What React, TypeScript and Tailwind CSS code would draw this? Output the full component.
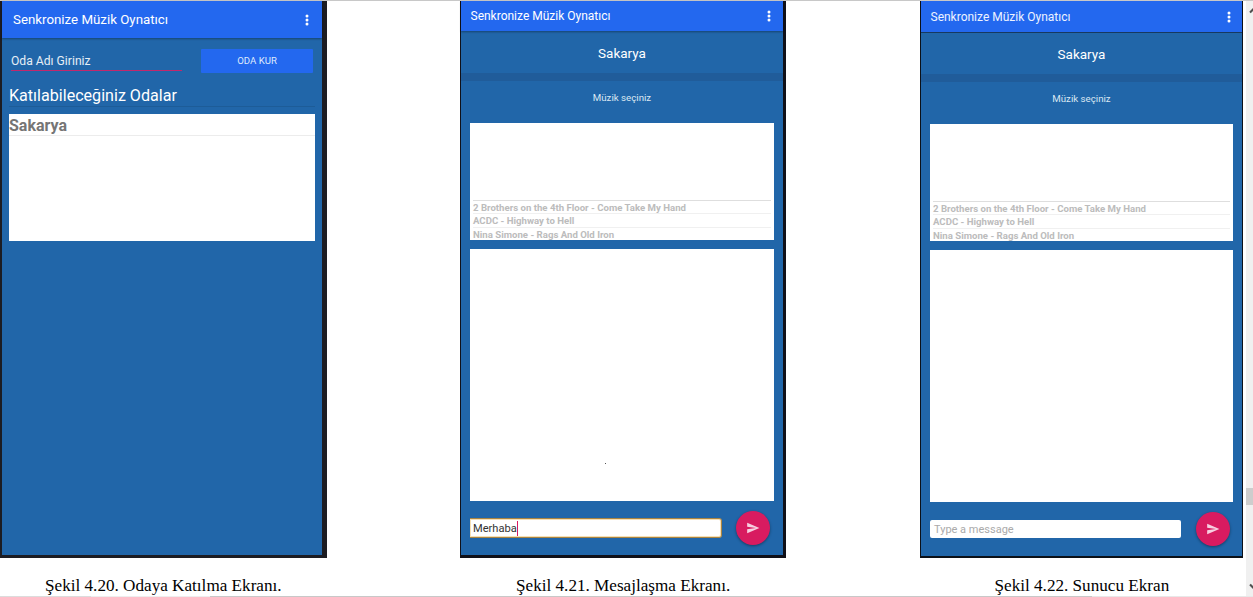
import React from "react";

const SONGS = [
  "2 Brothers on the 4th Floor - Come Take My Hand",
  "ACDC - Highway to Hell",
  "Nina Simone - Rags And Old Iron",
];

function MenuDots() {
  return (
    <svg width="4" height="12" viewBox="0 0 4 12" fill="#fff" aria-hidden="true">
      <circle cx="2" cy="2" r="1.5" />
      <circle cx="2" cy="6" r="1.5" />
      <circle cx="2" cy="10" r="1.5" />
    </svg>
  );
}

function SendButton() {
  return (
    <button className="flex size-[34px] shrink-0 items-center justify-center rounded-full bg-[#d81b60] shadow-[0_1px_3px_rgba(0,0,0,0.4)]">
      <svg width="14" height="14" viewBox="0 0 24 24" fill="#f6cfe0" aria-hidden="true">
        <path d="M2.01 21L23 12 2.01 3 2 10l15 2-15 2z" />
      </svg>
    </button>
  );
}

function JoinScreen() {
  return (
    <section className="h-[557px] w-[327px] shrink-0 bg-[#1c1c22] pr-[5px] pb-[3px] pl-[2px]">
      <div className="flex h-full flex-col bg-[#2166a9]">
        <header className="flex h-[37px] shrink-0 items-center justify-between bg-[#2368ef] pr-[13px] pl-[11px] text-[13.3px] text-white shadow-[0_1px_2px_rgba(0,0,0,0.35)]">
          <h1>Senkronize Müzik Oynatıcı</h1>
          <MenuDots />
        </header>
        <div className="mt-[11px] flex h-6 items-start justify-between pr-[9px] pl-[9px]">
          <div className="h-[22px] w-[171px] border-b border-[#c3286c] text-[12.15px] leading-[24px] text-[#e6eef6]">
            Oda Adı Giriniz
          </div>
          <button className="h-6 w-[112px] rounded-[1px] bg-[#2368ef] pt-px text-[9.6px] text-[#dfeafc]">ODA KUR</button>
        </div>
        <h2 className="mx-[7px] mt-[11px] h-[23px] border-b border-[#1d5c98] text-[16.1px] leading-[24px] text-white">
          Katılabileceğiniz Odalar
        </h2>
        <div className="mx-[7px] mt-[7px] h-[127px] bg-white">
          <div className="h-[22px] border-b border-[#ececec] text-[16px] leading-[24px] font-bold text-[#757575]">Sakarya</div>
        </div>
      </div>
    </section>
  );
}

function RoomBody({ children }: { children: React.ReactNode }) {
  return (
    <>
      <div className="flex h-[42px] shrink-0 items-center justify-center pt-[3px] text-[13.5px] text-white">Sakarya</div>
      <div className="h-[8px] shrink-0 bg-[#205c9a]" />
      <div className="flex h-[42px] shrink-0 items-center justify-center pb-[8px] text-[9.7px] text-[#dce8f3]">
        Müzik seçiniz
      </div>
      <div className="mx-[9px] h-[117px] shrink-0 bg-white px-[3px] pt-[77px]">
        <ul className="border-t border-[#dedede] text-[9.62px] font-bold text-[#bcbcbc]">
          {SONGS.map((song) => (
            <li key={song} className="h-[13.3px] border-b border-[#f0f0f0] leading-[13px] whitespace-nowrap last:border-b-0">
              {song}
            </li>
          ))}
        </ul>
      </div>
      {children}
    </>
  );
}

function MessageScreen() {
  return (
    <section className="h-[557px] w-[326px] shrink-0 bg-[#101018] pr-[3px] pb-[3px] pl-px">
      <div className="flex h-full flex-col bg-[#2166a9]">
        <header className="flex h-[30px] shrink-0 items-center justify-between bg-[#2368ef] pr-[12px] pl-[9.5px] text-[12px] text-white shadow-[0_1px_2px_rgba(0,0,0,0.35)]">
          <h1>Senkronize Müzik Oynatıcı</h1>
          <MenuDots />
        </header>
        <RoomBody>
          <div className="mx-[9px] mt-[9px] h-[252px] shrink-0 bg-white pt-[214px] pl-[135px]">
            <div className="size-px bg-[#555]" />
          </div>
          <div className="mt-[10px] flex items-center justify-between pr-[13px] pl-[9px]">
            <div className="flex h-5 w-[252px] items-center rounded-r-[3px] border border-l-0 border-[#a98442] bg-white pl-[3px] text-[11.1px] text-[#333] shadow-[inset_0_0_0_1px_#f6dfb4]">
              <span className="pt-[2px]">Merhaba</span>
              <span className="h-[15px] w-px shrink-0 bg-[#d81b60]" />
            </div>
            <SendButton />
          </div>
        </RoomBody>
      </div>
    </section>
  );
}

function HostScreen() {
  return (
    <section className="h-[557px] w-[323px] shrink-0 bg-[#0b1018] pr-px pb-[2px] pl-px">
      <div className="flex h-full flex-col bg-[#2166a9]">
        <header className="flex h-[31px] shrink-0 items-center justify-between bg-[#2368ef] pr-[11px] pl-[9.5px] text-[12px] text-[#edf3ff] shadow-[0_1px_0_#17395f]">
          <h1>Senkronize Müzik Oynatıcı</h1>
          <MenuDots />
        </header>
        <RoomBody>
          <div className="mx-[9px] mt-[9px] h-[252px] shrink-0 bg-white" />
          <div className="mt-[10px] flex items-center justify-between pr-[12px] pl-[9px]">
            <div className="flex h-[18px] w-[251px] items-center rounded-[2px] bg-white pt-[2px] pl-[4px] text-[11px] text-[#aaa]">
              Type a message
            </div>
            <SendButton />
          </div>
        </RoomBody>
      </div>
    </section>
  );
}

function Figure({ caption, indent, children }: { caption: string; indent: string; children: React.ReactNode }) {
  return (
    <figure className="flex shrink-0 flex-col">
      {children}
      <figcaption className={`mt-[17px] h-[21px] font-['Liberation_Serif',serif] text-[17.15px] leading-[21px] whitespace-nowrap text-black ${indent}`}>
        {caption}
      </figcaption>
    </figure>
  );
}

export default function App() {
  return (
    <div className="flex h-[597px] w-[1253px] flex-col overflow-hidden bg-white font-['Roboto',sans-serif]">
      <div className="h-px shrink-0 bg-[#c8c8c8]" />
      <main className="flex h-[595px] shrink-0">
        <Figure caption="Şekil 4.20. Odaya Katılma Ekranı." indent="pl-[45px]">
          <JoinScreen />
        </Figure>
        <div className="w-[133px] shrink-0" />
        <Figure caption="Şekil 4.21. Mesajlaşma Ekranı." indent="pl-[56px]">
          <MessageScreen />
        </Figure>
        <div className="w-[134px] shrink-0" />
        <Figure caption="Şekil 4.22. Sunucu Ekran" indent="pl-[74.5px]">
          <HostScreen />
        </Figure>
        <aside className="ml-[3px] flex w-[7px] shrink-0 flex-col bg-[#f0f0f0]">
          <svg className="mt-[6px]" width="7" height="8" viewBox="0 0 7 8" aria-hidden="true">
            <path d="M4 5.5L8 1.5" stroke="#505050" strokeWidth="2" />
          </svg>
          <div className="mt-[473px] h-[17px] bg-[#cdcdcd]" />
          <svg className="mt-[78px]" width="7" height="8" viewBox="0 0 7 8" aria-hidden="true">
            <path d="M4 1.5L8 5.5" stroke="#505050" strokeWidth="2" />
          </svg>
        </aside>
      </main>
      <div className="flex h-px shrink-0">
        <div className="w-[91px] bg-[#dcdcdc]" />
        <div className="w-[119px] bg-[#eeeeee]" />
        <div className="w-[882px] bg-[#c8c8c8]" />
        <div className="flex-1 bg-[#e8e8e8]" />
      </div>
    </div>
  );
}
